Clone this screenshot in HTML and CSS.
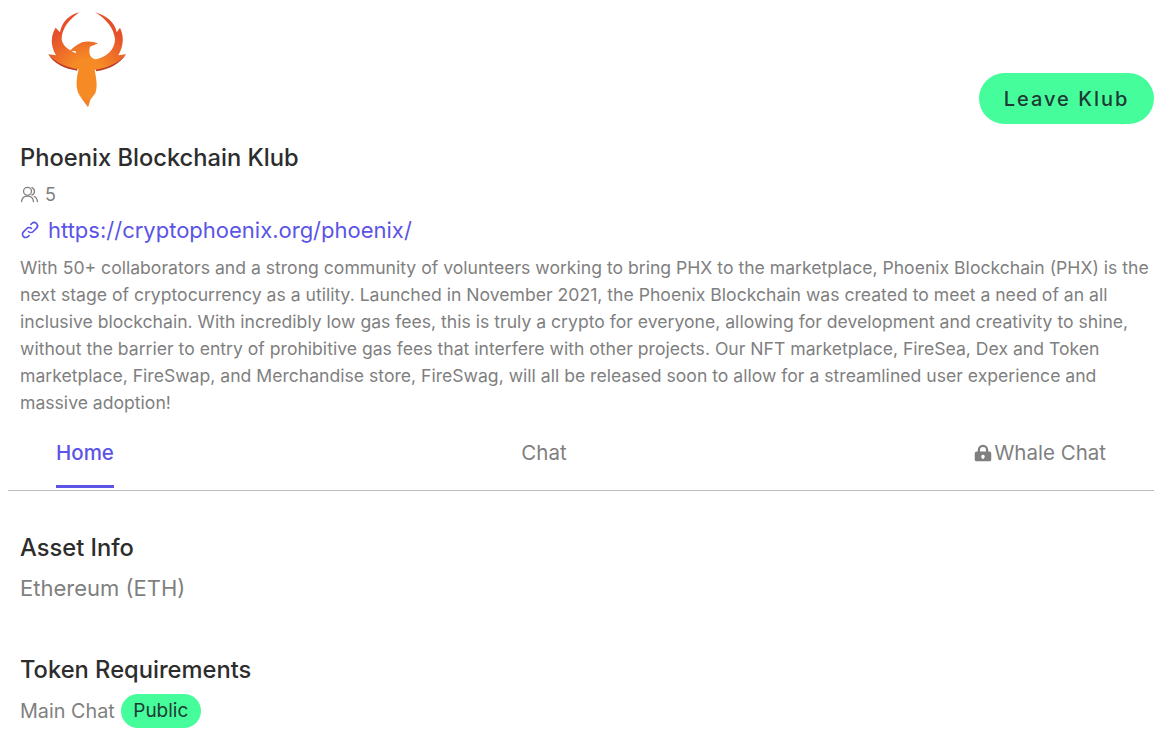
FILE: index.html
```html
<!DOCTYPE html>
<html lang="en">
<head>
<meta charset="utf-8">
<title>Phoenix Blockchain Klub</title>
<link rel="stylesheet" href="styles.css">
</head>
<body>
<main class="page">
  <header class="top">
    <svg class="logo" viewBox="60 0 390 375" aria-label="Phoenix logo">
      <defs>
        <radialGradient id="fire" gradientUnits="userSpaceOnUse" cx="262" cy="235" r="160">
          <stop offset="0.35" stop-color="#f68b26"/>
          <stop offset="1" stop-color="#e5502b"/>
        </radialGradient>
      </defs>
      <path fill="#b93a2a" d="M145 163 C160 190 195 208 232 212 L232 205 C200 198 170 185 145 163Z"/>
      <path fill="#b93a2a" d="M378 163 C362 190 325 210 288 214 L288 206 C320 198 352 185 378 163Z"/>
      <path fill="url(#fire)" d="M238 37 C210 44 185 65 180 97 L167 83 C153 105 150 135 168 166 L145 163 C165 188 200 203 236 208 C229 235 226 265 238 285 L248 300 L264 322 L272 298 L286 280 C294 258 288 232 284 210 C322 205 358 188 378 163 L355 166 C372 135 372 108 360 83 L350 97 C345 65 315 45 285 37 C318 56 342 85 345 118 C345 150 318 172 288 178 C272 175 264 162 270 140 L283 135 L294 130 C280 124 262 122 246 127 C232 133 220 143 210 152 L226 153 C228 155 228 158 228 160 C205 150 188 138 185 118 C185 85 208 58 238 37Z"/>
    </svg>
    <button class="leave" type="button">Leave Klub</button>
  </header>
  <section class="info">
    <h1 class="title">Phoenix Blockchain Klub</h1>
    <div class="members">
      <svg class="ico people" viewBox="0 0 24 24" fill="none" stroke="currentColor" stroke-width="1.6" stroke-linecap="round" stroke-linejoin="round"><circle cx="9.500" cy="8" r="5"/><path d="M2 21c.3-4.500 3.300-7 7.500-7s7.200 2.500 7.500 7"/><path d="M15 3.300a5 5 0 0 1 0 9.400"/><path d="M18 14.500c2.300.9 3.700 3.200 4 6.500"/></svg>
      <span>5</span>
    </div>
    <a class="link" href="#">
      <svg class="ico chain" viewBox="0 0 24 24" fill="none" stroke="currentColor" stroke-width="2" stroke-linecap="round" stroke-linejoin="round"><path d="M13.828 10.172a4 4 0 0 0-5.656 0l-4 4a4 4 0 1 0 5.656 5.656l1.102-1.101m-.758-4.899a4 4 0 0 0 5.656 0l4-4a4 4 0 0 0-5.656-5.656l-1.100 1.100"/></svg>
      <span>https://cryptophoenix.org/phoenix/</span>
    </a>
    <p class="desc">With 50+ collaborators and a strong community of volunteers working to bring PHX to the marketplace, Phoenix Blockchain (PHX) is the next stage of cryptocurrency as a utility. Launched in November 2021, the Phoenix Blockchain was created to meet a need of an all inclusive blockchain. With incredibly low gas fees, this is truly a crypto for everyone, allowing for development and creativity to shine, without the barrier to entry of prohibitive gas fees that interfere with other projects. Our NFT marketplace, FireSea, Dex and Token marketplace, FireSwap, and Merchandise store, FireSwag, will all be released soon to allow for a streamlined user experience and massive adoption!</p>
  </section>
  <nav class="tabs">
    <a class="tab active" href="#">Home</a>
    <a class="tab" href="#">Chat</a>
    <a class="tab" href="#"><svg class="lock" viewBox="0 0 24 24" fill="currentColor"><path fill-rule="evenodd" d="M12 1a7 7 0 0 0-7 7v2H3.500A2.500 2.500 0 0 0 1 12.500v8A2.500 2.500 0 0 0 3.500 23h17a2.500 2.500 0 0 0 2.500-2.500v-8a2.500 2.500 0 0 0-2.500-2.500H19V8a7 7 0 0 0-7-7zM8 10V8a4 4 0 0 1 8 0v2H8zm4 4.500a2.300 2.300 0 0 1 1 4.400V20h-2v-1.100a2.300 2.300 0 0 1 1-4.400z"/></svg>Whale Chat</a>
  </nav>
  <section class="block first">
    <h2 class="heading">Asset Info</h2>
    <div class="value">Ethereum (ETH)</div>
  </section>
  <section class="block">
    <h2 class="heading">Token Requirements</h2>
    <div class="value req"><span>Main Chat</span><span class="pill">Public</span></div>
  </section>
</main>
</body>
</html>
```
FILE: styles.css
```css
* { box-sizing: border-box; }
html, body { margin: 0; background: #fff; }
body { font-family: Inter, "Liberation Sans", sans-serif; color: #2d2d2d; overflow: hidden; height: 735px; }
.page { padding: 0 13px 0 8px; }
.top { display: flex; justify-content: space-between; align-items: flex-end; height: 124px; }
.logo { width: 130px; height: 125px; display: block; margin-left: 12px; align-self: flex-start; }
.leave { width: 175px; height: 51px; border: 0; border-radius: 26px; background: #45fd9a; color: #1f3a35; font: 500 20px Inter, sans-serif; letter-spacing: 2px; }
.info { padding: 0 0 0 12px; }
.title { margin: 19px 0 0; font-size: 23.7px; line-height: 30px; font-weight: 500; }
.members { display: flex; align-items: center; gap: 6px; margin-top: 9px; height: 24px; color: #7f7f7f; font-size: 18px; }
.ico { flex: none; }
.people { width: 19px; height: 19px; }
.chain { width: 20px; height: 20px; }
.link { display: flex; align-items: center; gap: 8px; margin-top: 11px; height: 26px; color: #5b54e6; text-decoration: none; font-size: 22px; }
.desc { margin: 11px 0 0; font-size: 17.6px; line-height: 27px; color: #7f7f7f; }
.tabs { display: flex; justify-content: space-between; padding: 0 48px; height: 68px; margin-top: 7px; border-bottom: 1px solid #bdbdbd; }
.tab { display: flex; align-items: center; height: 65px; padding-bottom: 6px; color: #7f7f7f; text-decoration: none; font-size: 20.5px; font-weight: 400; }
.tab.active { color: #5b54e6; font-weight: 500; padding-bottom: 4px; border-bottom: 3px solid #5b54e6; }
.lock { width: 18px; height: 18px; margin-right: 2px; }
.block { padding-left: 12px; margin-top: 52px; }
.block.first { margin-top: 42px; }
.heading { margin: 0; font-size: 23.7px; line-height: 30px; font-weight: 500; }
.value { margin-top: 10px; font-size: 22px; line-height: 30px; color: #7f7f7f; }
.req { display: flex; align-items: center; gap: 6px; margin-top: 9px; font-size: 19.8px; }
.pill { background: #45fd9a; color: #1f3a35; border-radius: 17px; font-size: 19px; height: 34px; line-height: 34px; padding: 0 12.5px; }
```
